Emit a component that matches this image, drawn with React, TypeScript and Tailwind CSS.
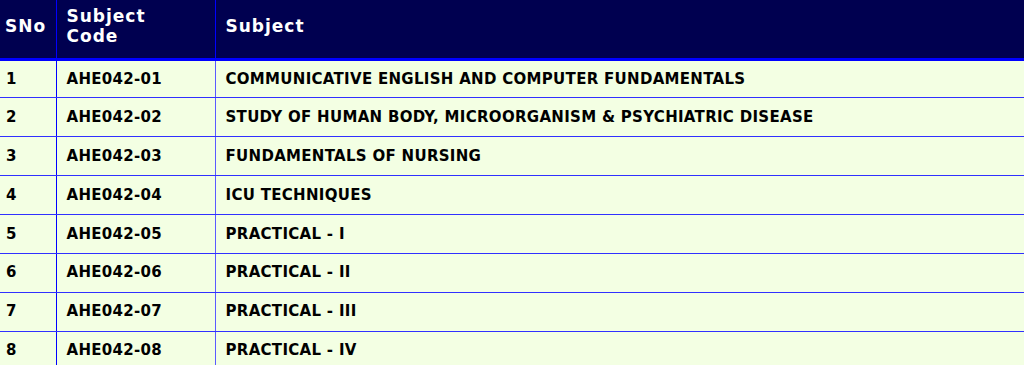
const subjects = [
  { code: 'AHE042-01', name: 'COMMUNICATIVE ENGLISH AND COMPUTER FUNDAMENTALS' },
  { code: 'AHE042-02', name: 'STUDY OF HUMAN BODY, MICROORGANISM & PSYCHIATRIC DISEASE' },
  { code: 'AHE042-03', name: 'FUNDAMENTALS OF NURSING' },
  { code: 'AHE042-04', name: 'ICU TECHNIQUES' },
  { code: 'AHE042-05', name: 'PRACTICAL - I' },
  { code: 'AHE042-06', name: 'PRACTICAL - II' },
  { code: 'AHE042-07', name: 'PRACTICAL - III' },
  { code: 'AHE042-08', name: 'PRACTICAL - IV' },
]

export default function App() {
  return (
    <div className="w-[1024px] h-[365px] overflow-hidden bg-white font-['DejaVu_Sans',Verdana,sans-serif]">
      <table className="w-full border-collapse table-fixed border-[#0000ff]">
        <colgroup>
          <col className="w-[56px]" />
          <col className="w-[159px]" />
          <col />
        </colgroup>
        <thead>
          <tr className="h-[59px] bg-[#000050] text-white text-left text-[17px] font-bold tracking-[1px] leading-[20px] border-[#0000ff]">
            <th className="pl-[5px] pr-1 pb-[5px] border-r border-r-[#0000ff] border-b-[3px] border-b-[#0000ff]">SNo</th>
            <th className="pl-[10px] pr-2 pb-[5px] border-r border-r-[#0000ff] border-b-[3px] border-b-[#0000ff]">
              Subject
              <br />
              Code
            </th>
            <th className="pl-[10px] pr-2 pb-[5px] border-b-[3px] border-b-[#0000ff]">Subject</th>
          </tr>
        </thead>
        <tbody>
          {subjects.map((s, i) => (
            <tr key={s.code} className="h-[38.86px] bg-[#f3ffe3] text-black text-[15px] font-bold tracking-[0.3px] border-[#0000ff]">
              <td className="pl-[6px] border-r border-r-[#0000ff] border-b border-b-[#3030ff]">{i + 1}</td>
              <td className="pl-[10px] border-r border-r-[#5a5aff] border-b border-b-[#3030ff]">{s.code}</td>
              <td className="pl-[10px] border-b border-b-[#3030ff]">{s.name}</td>
            </tr>
          ))}
        </tbody>
      </table>
    </div>
  )
}
